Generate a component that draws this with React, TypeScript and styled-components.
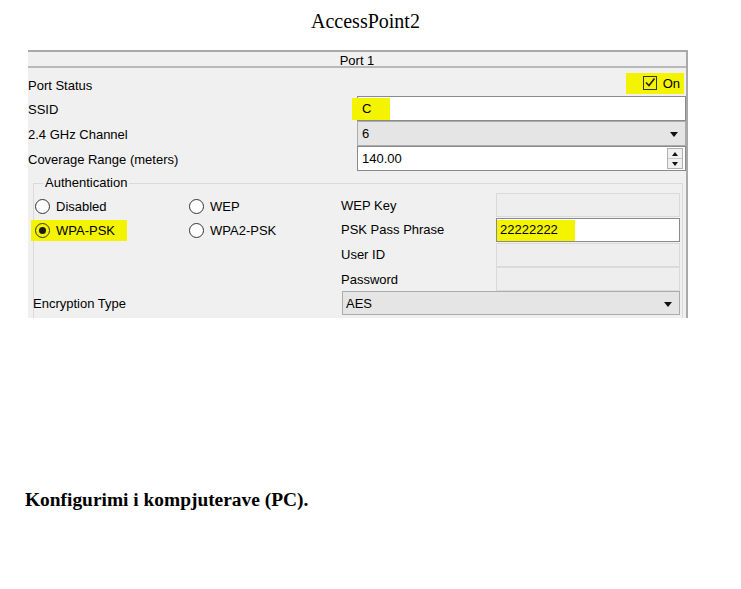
import styled, { createGlobalStyle } from "styled-components";

const GlobalStyle = createGlobalStyle`
  html, body {
    margin: 0;
    padding: 0;
    background: #ffffff;
  }
  *, *::before, *::after {
    box-sizing: border-box;
  }
  body {
    font-family: "Liberation Sans", Arial, sans-serif;
    color: #000;
  }
`;

const Page = styled.div`
  width: 741px;
  height: 589px;
  overflow: hidden;
`;

const Title = styled.div`
  font-family: "Liberation Serif", "Times New Roman", serif;
  font-size: 20px;
  line-height: 24px;
  text-align: center;
  padding: 9px 10px 0 0;
`;

const Panel = styled.div`
  margin: 17px 0 0 28px;
  width: 660px;
  background: #f0f0f0;
  border-top: 2px solid #a9a9a9;
  border-right: 2px solid #a9a9a9;
  font-size: 13px;
`;

const PanelHeader = styled.div`
  height: 16px;
  line-height: 18px;
  text-align: center;
  border-bottom: 2px solid #b9b9b9;
`;

const FormGrid = styled.div`
  display: grid;
  grid-template-columns: 329px 1fr;
`;

const Label = styled.div<{ $h?: number; $pt?: number }>`
  height: ${(p) => p.$h ?? 25}px;
  padding-top: ${(p) => p.$pt ?? 1}px;
  display: flex;
  align-items: center;
  white-space: nowrap;
`;

const CheckCell = styled.div`
  height: 28px;
  padding-top: 5px;
  display: flex;
  justify-content: flex-end;
  align-items: flex-start;
`;

const Highlight = styled.span`
  background: #f4f400;
  display: inline-flex;
  align-items: center;
`;

const CheckWrap = styled(Highlight)`
  height: 21px;
  padding: 0 4px 0 17px;
  margin-right: 2px;
  gap: 6px;
`;

const CheckBox = styled.span`
  width: 14px;
  height: 14px;
  border: 1px solid #333;
  background: transparent;
  display: inline-flex;
  align-items: center;
  justify-content: center;
  margin-top: -2px;
`;

const Field = styled.div<{ $w?: "white" | "off" | "select" }>`
  position: relative;
  height: 25px;
  display: flex;
  align-items: center;
  padding-left: 4px;
  border: 1px solid
    ${(p) => (p.$w === "off" ? "#dadada" : p.$w === "select" ? "#acacac" : "#8a8a8a")};
  background: ${(p) =>
    p.$w === "off" ? "#eeeeee" : p.$w === "select" ? "#e5e5e5" : "#ffffff"};
  white-space: nowrap;
`;

const Arrow = styled.span`
  position: absolute;
  right: 7px;
  top: 10px;
  width: 0;
  height: 0;
  border-left: 4px solid transparent;
  border-right: 4px solid transparent;
  border-top: 5px solid #111;
`;

const Spinner = styled.div`
  position: absolute;
  right: 2px;
  top: 1px;
  bottom: 1px;
  width: 16px;
  display: flex;
  flex-direction: column;
  border: 1px solid #b0b0b0;
  background: #f0f0f0;
`;

const SpinHalf = styled.div<{ $up?: boolean }>`
  flex: 1;
  display: flex;
  align-items: center;
  justify-content: center;
  border-top: ${(p) => (p.$up ? "none" : "1px solid #c8c8c8")};
  &::after {
    content: "";
    border-left: 3px solid transparent;
    border-right: 3px solid transparent;
    ${(p) => (p.$up ? "border-bottom: 4px solid #111;" : "border-top: 4px solid #111;")}
  }
`;

const InlineMark = styled.span<{ $left: number; $width: number }>`
  position: absolute;
  left: ${(p) => p.$left}px;
  top: 1px;
  bottom: 0;
  width: ${(p) => p.$width}px;
  background: #f4f400;
`;

const FieldText = styled.span`
  position: relative;
`;

const Group = styled.fieldset`
  margin: 4px 3px 0 5px;
  padding: 0 2px 3px 0;
  border: 1px solid #dadada;
  border-bottom: none;
  min-width: 0;
`;

const Legend = styled.legend`
  margin-left: 9px;
  padding: 0 2px;
  line-height: 16px;
  font-size: 13px;
`;

const AuthGrid = styled.div`
  display: grid;
  grid-template-columns: 154px 153px 155px 184px;
  grid-template-rows: 24px 25px 25px 24px 24px;
  margin-top: 2px;
`;

const Cell = styled.div<{ $span?: number; $ml?: number }>`
  grid-column: span ${(p) => p.$span ?? 1};
  display: flex;
  align-items: center;
  margin-left: ${(p) => p.$ml ?? 0}px;
  white-space: nowrap;
`;

const RadioLine = styled.span<{ $mark?: boolean }>`
  display: inline-flex;
  align-items: center;
  gap: 6px;
  height: 21px;
  padding: 0 12px 0 4px;
  margin-left: -3px;
  margin-top: 2px;
  background: ${(p) => (p.$mark ? "#f4f400" : "transparent")};
`;

const RadioDot = styled.span<{ $on?: boolean }>`
  width: 15px;
  height: 15px;
  border-radius: 50%;
  border: 1px solid #333;
  background: ${(p) => (p.$on ? "transparent" : "#ffffff")};
  display: inline-flex;
  align-items: center;
  justify-content: center;
  &::after {
    content: "";
    width: 7px;
    height: 7px;
    border-radius: 50%;
    background: ${(p) => (p.$on ? "#1a1a1a" : "transparent")};
  }
`;

const SubField = styled(Field)`
  width: 100%;
  height: 24px;
  padding-left: 3px;
`;

const Footer = styled.div`
  font-family: "Liberation Serif", "Times New Roman", serif;
  font-weight: bold;
  font-size: 19.4px;
  line-height: 22px;
  margin: 171px 0 0 25px;
`;

const Radio = ({ label, on, mark }: { label: string; on?: boolean; mark?: boolean }) => (
  <RadioLine $mark={mark}>
    <RadioDot $on={on} />
    {label}
  </RadioLine>
);

export default function App() {
  return (
    <Page>
      <GlobalStyle />
      <Title>AccessPoint2</Title>
      <Panel>
        <PanelHeader>Port 1</PanelHeader>
        <FormGrid>
          <Label $h={28} $pt={6}>Port Status</Label>
          <CheckCell>
            <CheckWrap>
              <CheckBox>
                <svg width="12" height="11" viewBox="0 0 12 11">
                  <path d="M2 5.5 L5 8.5 L10.5 1.5" fill="none" stroke="#222" strokeWidth="1.6" />
                </svg>
              </CheckBox>
              On
            </CheckWrap>
          </CheckCell>

          <Label>SSID</Label>
          <Field>
            <InlineMark $left={-6} $width={38} />
            <FieldText>C</FieldText>
          </Field>

          <Label>2.4 GHz Channel</Label>
          <Field $w="select">
            6
            <Arrow />
          </Field>

          <Label>Coverage Range (meters)</Label>
          <Field>
            140.00
            <Spinner>
              <SpinHalf $up />
              <SpinHalf />
            </Spinner>
          </Field>
        </FormGrid>

        <Group>
          <Legend>Authentication</Legend>
          <AuthGrid>
            <Cell>
              <Radio label="Disabled" />
            </Cell>
            <Cell>
              <Radio label="WEP" />
            </Cell>
            <Cell>WEP Key</Cell>
            <Cell>
              <SubField $w="off" />
            </Cell>

            <Cell>
              <Radio label="WPA-PSK" on mark />
            </Cell>
            <Cell>
              <Radio label="WPA2-PSK" />
            </Cell>
            <Cell>PSK Pass Phrase</Cell>
            <Cell>
              <SubField>
                <InlineMark $left={0} $width={78} />
                <FieldText>22222222</FieldText>
              </SubField>
            </Cell>

            <Cell $span={2} />
            <Cell>User ID</Cell>
            <Cell>
              <SubField $w="off" />
            </Cell>

            <Cell $span={2} />
            <Cell>Password</Cell>
            <Cell>
              <SubField $w="off" />
            </Cell>

            <Cell $span={2} $ml={-1}>Encryption Type</Cell>
            <Cell $span={2} $ml={1}>
              <SubField $w="select">
                AES
                <Arrow />
              </SubField>
            </Cell>
          </AuthGrid>
        </Group>
      </Panel>
      <Footer>Konfigurimi i kompjuterave (PC).</Footer>
    </Page>
  );
}
